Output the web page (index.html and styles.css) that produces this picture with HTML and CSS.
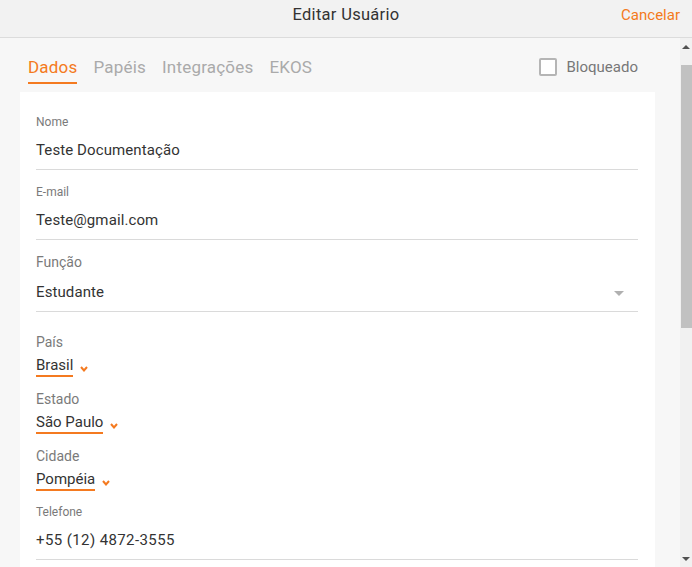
FILE: index.html
```html
<!DOCTYPE html>
<html lang="pt-BR">
<head>
<meta charset="utf-8">
<title>Editar Usuário</title>
<link rel="stylesheet" href="styles.css">
</head>
<body>
<header class="header">
  <div class="title">Editar Usuário</div>
  <a class="cancel">Cancelar</a>
</header>
<div class="main">
  <div class="content">
    <div class="tabs-row">
      <nav class="tabs">
        <span class="tab active">Dados</span>
        <span class="tab">Papéis</span>
        <span class="tab">Integrações</span>
        <span class="tab">EKOS</span>
      </nav>
      <label class="blocked"><span class="checkbox"></span>Bloqueado</label>
    </div>
    <section class="card">
      <div class="field">
        <div class="label small">Nome</div>
        <div class="value">Teste Documentação</div>
      </div>
      <div class="field">
        <div class="label small">E-mail</div>
        <div class="value">Teste@gmail.com</div>
      </div>
      <div class="field select">
        <div class="label">Função</div>
        <div class="value">Estudante<span class="caret"></span></div>
      </div>
      <div class="pick first">
        <div class="label">País</div>
        <div class="pick-row"><span class="pick-value">Brasil</span><svg class="chev" width="8" height="6" viewBox="0 0 8 6"><path d="M1 1 L4 4.5 L7 1" fill="none" stroke="#f47a20" stroke-width="2"/></svg></div>
      </div>
      <div class="pick">
        <div class="label">Estado</div>
        <div class="pick-row"><span class="pick-value">São Paulo</span><svg class="chev" width="8" height="6" viewBox="0 0 8 6"><path d="M1 1 L4 4.5 L7 1" fill="none" stroke="#f47a20" stroke-width="2"/></svg></div>
      </div>
      <div class="pick">
        <div class="label">Cidade</div>
        <div class="pick-row"><span class="pick-value">Pompéia</span><svg class="chev" width="8" height="6" viewBox="0 0 8 6"><path d="M1 1 L4 4.5 L7 1" fill="none" stroke="#f47a20" stroke-width="2"/></svg></div>
      </div>
      <div class="field phone">
        <div class="label small">Telefone</div>
        <div class="value">+55 (12) 4872-3555</div>
      </div>
    </section>
  </div>
  <div class="scrollbar">
    <div class="sb-btn"><span class="arrow-up"></span></div>
    <div class="sb-track"><div class="sb-thumb"></div></div>
    <div class="sb-btn bottom"><span class="arrow-down"></span></div>
  </div>
</div>
</body>
</html>
```

FILE: styles.css
```css
* { box-sizing: border-box; }
html, body { margin: 0; padding: 0; }
body {
  width: 692px;
  height: 567px;
  overflow: hidden;
  background: #f7f7f7;
  font-family: Roboto, "Liberation Sans", sans-serif;
  color: #333;
}
.header {
  height: 38px;
  background: #f2f2f2;
  border-bottom: 1px solid #dcdcdc;
  position: relative;
  display: flex;
  justify-content: center;
  padding-top: 5px;
}
.title {
  font-size: 16.5px;
  line-height: 20px;
  color: #333;
  letter-spacing: 0.3px;
}
.cancel {
  position: absolute;
  right: 12px;
  top: 5px;
  font-size: 15px;
  line-height: 20px;
  color: #f47a20;
}
.main {
  display: flex;
  height: 529px;
}
.content {
  flex: 1;
  padding: 0 25px 0 20px;
}
.tabs-row {
  display: flex;
  justify-content: space-between;
  align-items: flex-start;
  padding: 19px 17px 0 8px;
  margin-bottom: 8px;
}
.tabs { display: flex; gap: 16px; }
.tab {
  font-size: 17px;
  line-height: 20px;
  color: #aaa;
  padding-bottom: 5px;
  border-bottom: 2px solid transparent;
  letter-spacing: 0.2px;
}
.tab.active {
  color: #f47a20;
  border-bottom-color: #f47a20;
}
.blocked {
  display: flex;
  align-items: center;
  gap: 10px;
  font-size: 15px;
  line-height: 20px;
  color: #777;
}
.checkbox {
  width: 18px;
  height: 18px;
  border: 2px solid #b5b5b5;
  border-radius: 2px;
  background: #fff;
}
.card {
  background: #fff;
  height: 480px;
  padding: 23px 17px 0 16px;
}
.label {
  font-size: 14px;
  line-height: 16px;
  color: #7a7a7a;
}
.label.small {
  font-size: 12px;
  line-height: 14px;
}
.field {
  border-bottom: 1px solid #dadada;
  margin-bottom: 15px;
}
.field .value {
  margin-top: 11px;
  padding-bottom: 9px;
  font-size: 15px;
  line-height: 20px;
  color: #333;
  position: relative;
  letter-spacing: 0.1px;
}
.field.select .value { margin-top: 12px; }
.field.select { margin-top: -1px; margin-bottom: 22px; }
.caret {
  position: absolute;
  right: 14px;
  top: 9px;
  width: 0;
  height: 0;
  border-left: 5px solid transparent;
  border-right: 5px solid transparent;
  border-top: 5px solid #b0b0b0;
}
.pick { margin-bottom: 14px; }
.pick-row {
  display: flex;
  align-items: flex-end;
  margin-top: 5px;
}
.pick-value {
  font-size: 15px;
  line-height: 20px;
  color: #333;
  border-bottom: 2px solid #f47a20;
}
.chev {
  margin-left: 7px;
  margin-bottom: 5px;
}
.field.phone { margin-top: 1px; }
.field.phone .value { letter-spacing: 0.4px; }
.scrollbar {
  width: 12px;
  background: #f1f1f1;
  display: flex;
  flex-direction: column;
}
.sb-btn {
  height: 18px;
  display: flex;
  justify-content: center;
  align-items: center;
}
.arrow-up {
  width: 0; height: 0;
  border-left: 4px solid transparent;
  border-right: 4px solid transparent;
  border-bottom: 4px solid #505050;
}
.arrow-down {
  width: 0; height: 0;
  border-left: 4px solid transparent;
  border-right: 4px solid transparent;
  border-top: 4px solid #505050;
}
.sb-track { flex: 1; padding: 9px 0 0 1px; }
.sb-thumb {
  height: 263px;
  background: #c1c1c1;
}
.sb-btn.bottom { height: 16px; }
```
